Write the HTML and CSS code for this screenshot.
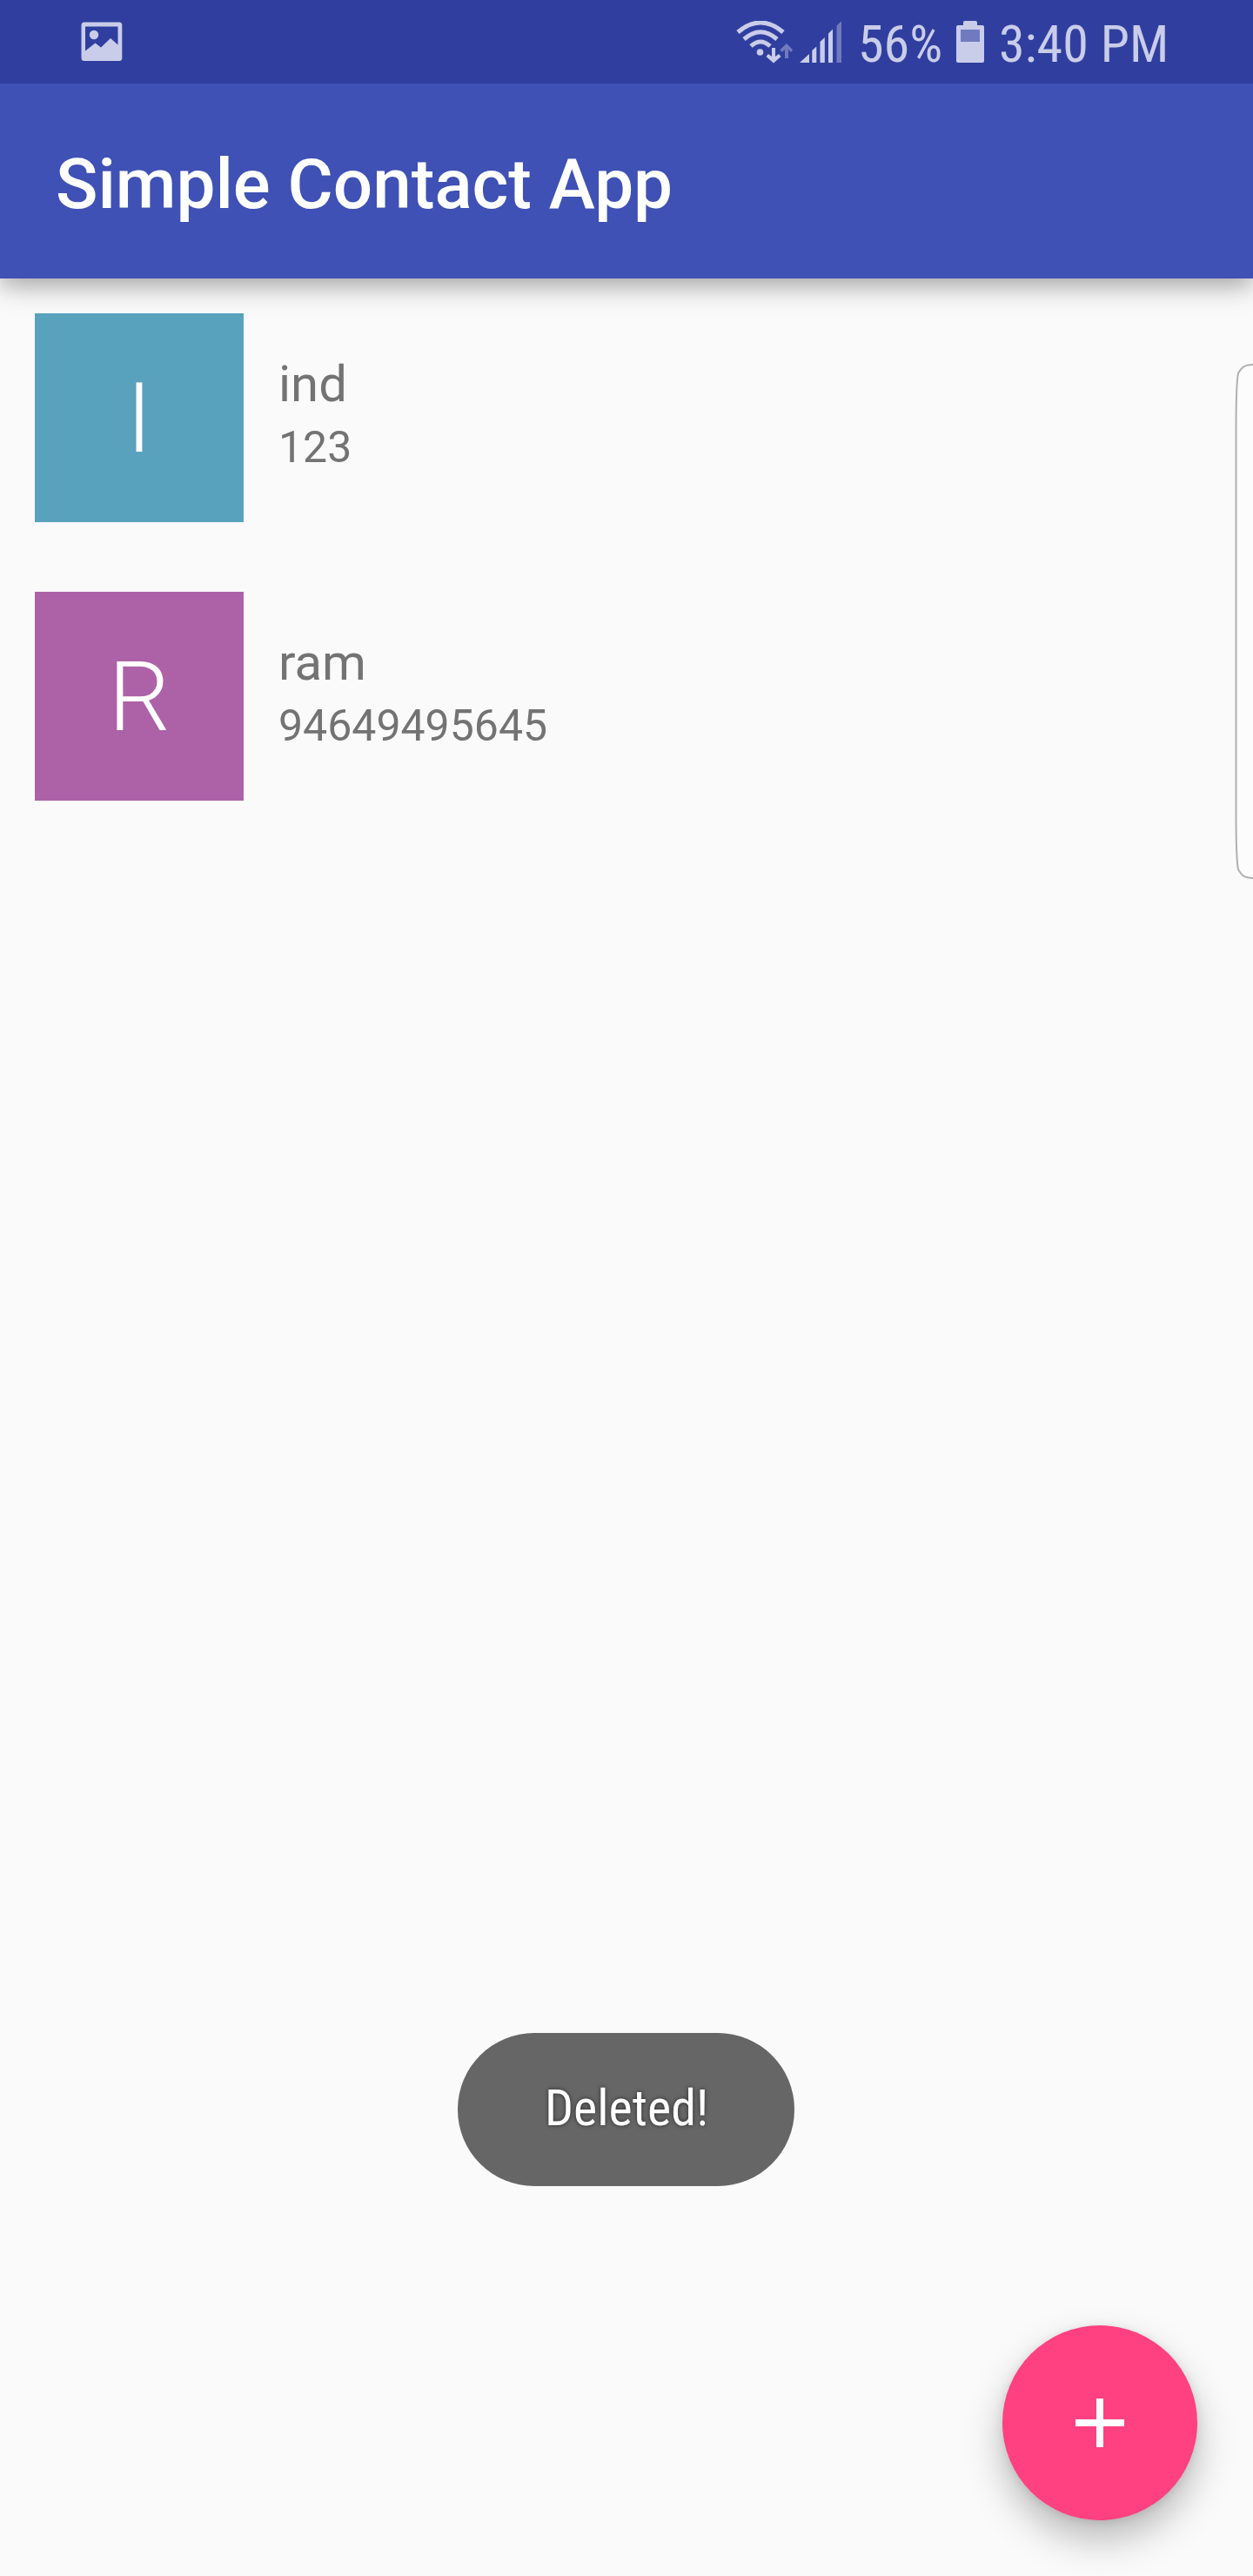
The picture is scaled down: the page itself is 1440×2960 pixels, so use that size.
FILE: index.html
```html
<!DOCTYPE html>
<html lang="en">
<head>
<meta charset="utf-8">
<title>Simple Contact App</title>
<link rel="stylesheet" href="styles.css">
</head>
<body>
<div class="screen">
  <header class="status-bar">
    <svg class="icon-picture" width="48" height="46" viewBox="0 0 48 46"><path fill-rule="evenodd" d="M4 0.5H44Q47.3 .5 47.3 4V41.5Q47.3 45 44 45H4Q.5 45 .5 41.5V4Q.5 .5 4 .5ZM5 5.5V33.5L16.5 24.5L23 29.5L34 19L42.5 26.5V5.500Z"/><circle cx="15" cy="15" r="5.200"/></svg>
    <span class="spacer"></span>
    <svg class="icon-wifi" width="66" height="50" viewBox="0 0 66 50"><g class="arcs"><path d="M2 13Q28 -9 54 13"/><path d="M9 21Q28 4.500 47 21"/><path d="M17 29Q28 19 39 29"/></g><circle cx="27.500" cy="36" r="3.800"/><path d="M41 31H45V41L49 38L51.500 41L43 48.500L34.500 41L37 38L41 41Z"/><path class="dim" d="M56 43H60V33L63 36L65 33L58 26L50.500 33L52.500 36L56 33Z"/></svg>
    <svg class="icon-signal" width="49" height="48" viewBox="0 0 49 48"><path d="M0 48L11 38V48ZM14.300 48V34L19.300 29.500V48ZM23.500 48V24L28.800 19V48ZM33 48V14.500L38 9.500V48Z"/><path class="dim" d="M42.500 48V5.500L48 0.500V48Z"/></svg>
    <span class="status-text battery-level"><span class="condensed">56%</span></span>
    <svg class="icon-battery" width="32" height="48" viewBox="0 0 32 48"><path fill-rule="evenodd" d="M10 0H22Q24 0 24 2V5H30Q32 5 32 7V46Q32 48 30 48H2Q0 48 0 46V7Q0 5 2 5H8V2Q8 0 10 0ZM5 10V24H27V10Z"/><path class="dim" d="M5 10H27V24H5Z"/></svg>
    <span class="status-text clock"><span class="condensed">3:40 PM</span></span>
  </header>
  <div class="app-bar"><h1 class="app-title">Simple Contact App</h1></div>
  <ul class="contacts">
    <li class="contact">
      <div class="avatar avatar-blue">I</div>
      <div class="details"><div class="name">ind</div><div class="phone">123</div></div>
    </li>
    <li class="contact">
      <div class="avatar avatar-purple">R</div>
      <div class="details"><div class="name">ram</div><div class="phone">94649495645</div></div>
    </li>
  </ul>
  <svg class="edge-handle" width="22" height="596" viewBox="0 0 22 596"><path d="M23 3C12 3 9 6 5 13C3.500 20 2.500 34 2.500 80V516C2.500 562 3.500 576 5 583C9 590 12 593 23 593"/></svg>
  <div class="toast"><span class="condensed">Deleted!</span></div>
  <button class="fab" aria-label="Add contact"><svg width="56" height="56" viewBox="0 0 56 56"><path d="M24 0H32V24H56V32H32V56H24V32H0V24H24Z"/></svg></button>
</div>
</body>
</html>
```
FILE: styles.css
```css
* { box-sizing: border-box; }
body { margin: 0; font-family: Roboto, "Liberation Sans", sans-serif; }
.screen { position: relative; width: 1440px; height: 2960px; background: #fafafa; overflow: hidden; }

.status-bar { position: relative; z-index: 1; display: flex; align-items: flex-start; height: 96px; padding: 24px 95px 0 93px; background: #303f9f; color: #cacde9; }
.status-bar svg { flex: none; fill: #cacde9; }
.status-bar .dim { fill: #707bbf; }
.icon-picture { margin-top: 1px; }
.spacer { flex: 1; }
.icon-wifi { margin-right: 7px; }
.arcs { fill: none; stroke: #cacde9; stroke-width: 5; }
.icon-signal { margin-right: 18px; }
.status-text { height: 60px; line-height: 60px; font-size: 60px; margin-top: -3px; white-space: nowrap; }
.battery-level { width: 97px; margin-right: 16px; }
.icon-battery { margin-right: 17px; }
.clock { width: 197px; }
.condensed { font-family: "Roboto Condensed", Roboto, sans-serif; font-stretch: 75%; }

.app-bar { position: relative; display: flex; align-items: center; height: 224px; padding: 7px 64px 0; background: #3f51b5; box-shadow: 0 8px 28px rgba(0, 0, 0, .36); }
.app-title { margin: 0; color: #fff; font-size: 80px; font-weight: 500; line-height: 96px; white-space: nowrap; }

.contacts { margin: 0; padding: 0; list-style: none; }
.contact { display: flex; gap: 40px; height: 320px; padding: 40px; }
.avatar { display: flex; align-items: center; justify-content: center; width: 240px; height: 240px; color: #fff; font-size: 112px; font-weight: 300; }
.avatar-blue { background: #59a2be; }
.avatar-purple { background: #ad62a7; }
.details { padding-top: 46px; color: #737373; }
.name { font-size: 58px; line-height: 70px; }
.phone { font-size: 50px; line-height: 76px; }

.edge-handle { position: absolute; right: 0; top: 416px; fill: #fcfcfc; stroke: #b0b0b0; stroke-width: 2; }

.toast { position: absolute; left: 526px; top: 2336px; width: 387px; height: 176px; padding-left: 100px; border-radius: 88px; background: #666; color: #fff; font-size: 58px; line-height: 172px; white-space: nowrap; text-shadow: 0 0 5px rgba(0, 0, 0, .6); }

.fab { position: absolute; left: 1152px; top: 2672px; display: flex; align-items: center; justify-content: center; width: 224px; height: 224px; padding: 0; border: 0; border-radius: 50%; background: #ff4081; box-shadow: 0 22px 44px rgba(0, 0, 0, .26), 0 2px 12px rgba(0, 0, 0, .1); }
.fab svg { fill: #fff; }
```
